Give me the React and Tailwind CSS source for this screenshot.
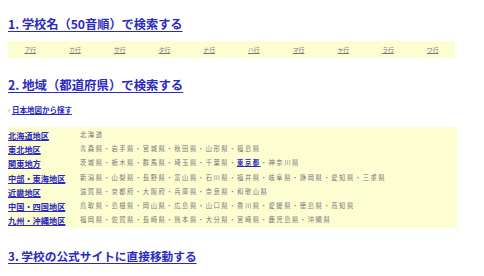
const kana = ['ア行', 'カ行', 'サ行', 'タ行', 'ナ行', 'ハ行', 'マ行', 'ヤ行', 'ラ行', 'ワ行'];

const regions = [
  { name: '北海道地区', prefs: ['北海道'] },
  { name: '東北地区', prefs: ['青森県', '岩手県', '宮城県', '秋田県', '山形県', '福島県'] },
  { name: '関東地方', prefs: ['茨城県', '栃木県', '群馬県', '埼玉県', '千葉県', '東京都', '神奈川県'], link: '東京都' },
  { name: '中部・東海地区', prefs: ['新潟県', '山梨県', '長野県', '富山県', '石川県', '福井県', '岐阜県', '静岡県', '愛知県', '三重県'] },
  { name: '近畿地区', prefs: ['滋賀県', '京都府', '大阪府', '兵庫県', '奈良県', '和歌山県'] },
  { name: '中国・四国地区', prefs: ['鳥取県', '島根県', '岡山県', '広島県', '山口県', '香川県', '愛媛県', '徳島県', '高知県'] },
  { name: '九州・沖縄地区', prefs: ['福岡県', '佐賀県', '長崎県', '熊本県', '大分県', '宮崎県', '鹿児島県', '沖縄県'] },
];

function Heading({ children, className = '' }) {
  return (
    <h2 className={`leading-[13px] font-bold text-[#2a2ac0] underline underline-offset-2 ${className}`}>
      {children}
    </h2>
  );
}

export default function App() {
  return (
    <div
      className="w-[484px] h-[276px] bg-white px-2 pt-[18px] overflow-hidden"
      style={{ fontFamily: '"Noto Sans CJK JP", "Noto Sans", sans-serif' }}
    >
      <Heading className="text-[12.2px]">1. 学校名（50音順）で検索する</Heading>

      {/* 50音 row */}
      <div className="mt-[10px] w-[447px] h-[17px] bg-[#fdfdd2] grid grid-cols-10 items-center">
        {kana.map((k) => (
          <a key={k} className="text-center text-[5.8px] leading-none text-[#777] underline">
            {k}
          </a>
        ))}
      </div>

      <Heading className="mt-[21px] text-[12.4px]">2. 地域（都道府県）で検索する</Heading>

      <div className="mt-[13px] flex items-center gap-[2px] text-[7.5px] leading-[10px] font-bold">
        <span className="text-[#e08a2c] text-[6px]">›</span>
        <a className="text-[#2a2ac0] underline">日本地図から探す</a>
      </div>

      {/* region table */}
      <div className="mt-[12px] w-[449px] bg-[#fdfdd2] py-[1px]">
        {regions.map((r) => (
          <div key={r.name} className="flex items-center h-[14.2px]">
            <a className="w-[72px] shrink-0 text-[8.2px] leading-none font-bold text-[#2a2ac0] underline">
              {r.name}
            </a>
            <div className="text-[6.3px] leading-none tracking-[1.55px] text-[#777] whitespace-nowrap">
              {r.prefs.map((p, i) => (
                <span key={p}>
                  {i > 0 && '・'}
                  {p === r.link ? (
                    <a className="text-[#2a2ac0] font-bold underline">{p}</a>
                  ) : (
                    p
                  )}
                </span>
              ))}
            </div>
          </div>
        ))}
      </div>

      <Heading className="mt-[21px] text-[11.7px]">3. 学校の公式サイトに直接移動する</Heading>
    </div>
  );
}
